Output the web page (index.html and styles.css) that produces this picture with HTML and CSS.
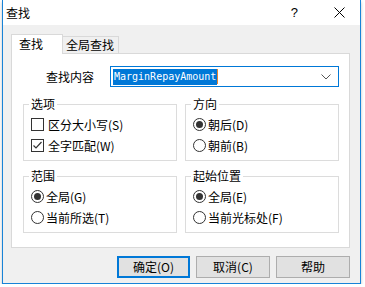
FILE: index.html
```html
<!DOCTYPE html>
<html lang="zh-CN">
<head>
    <meta charset="UTF-8">
    <title>查找</title>
    <link rel="stylesheet" href="styles.css">
</head>
<body>
    <div class="window">
        <div class="titlebar">
            <span class="title">查找</span>
            <span class="help">?</span>
            <span class="close">
                <svg width="11" height="11" viewBox="0 0 11 11">
                    <path d="M0.5 0.5 L10.5 10.5 M10.5 0.5 L0.5 10.5" stroke="#000" stroke-width="1" fill="none"/>
                </svg>
            </span>
        </div>
        <div class="content">
            <div class="tabs">
                <div class="tab active">查找</div>
                <div class="tab">全局查找</div>
            </div>
            <div class="panel">
                <div class="find-row">
                    <span class="find-label">查找内容</span>
                    <div class="combo">
                        <span class="combo-text">MarginRepayAmount</span><span class="caret"></span>
                        <svg class="chevron" width="10" height="6" viewBox="0 0 10 6">
                            <path d="M0.5 0.5 L5 5 L9.5 0.5" stroke="#555" stroke-width="1" fill="none"/>
                        </svg>
                    </div>
                </div>
                <div class="groups">
                    <div class="group">
                        <div class="group-title">选项</div>
                        <div class="group-items">
                            <div class="item"><span class="check"></span>区分大小写(S)</div>
                            <div class="item">
                                <span class="check">
                                    <svg width="11" height="11" viewBox="0 0 11 11">
                                        <path d="M1.5 5.5 L4 8 L9.5 2" stroke="#333" stroke-width="1.2" fill="none"/>
                                    </svg>
                                </span>全字匹配(W)
                            </div>
                        </div>
                    </div>
                    <div class="group">
                        <div class="group-title">方向</div>
                        <div class="group-items">
                            <div class="item"><span class="radio checked"></span>朝后(D)</div>
                            <div class="item"><span class="radio"></span>朝前(B)</div>
                        </div>
                    </div>
                    <div class="group">
                        <div class="group-title">范围</div>
                        <div class="group-items">
                            <div class="item"><span class="radio checked"></span>全局(G)</div>
                            <div class="item"><span class="radio"></span>当前所选(T)</div>
                        </div>
                    </div>
                    <div class="group">
                        <div class="group-title">起始位置</div>
                        <div class="group-items">
                            <div class="item"><span class="radio checked"></span>全局(E)</div>
                            <div class="item"><span class="radio"></span>当前光标处(F)</div>
                        </div>
                    </div>
                </div>
            </div>
            <div class="buttons">
                <button class="btn default">确定(O)</button>
                <button class="btn">取消(C)</button>
                <button class="btn">帮助</button>
            </div>
        </div>
    </div>
</body>
</html>
```

FILE: styles.css
```css
body {
    margin: 0;
    background-color: #fff;
    font-family: "Noto Sans CJK SC", sans-serif;
    font-size: 12px;
    color: #000;
}

.window {
    box-sizing: border-box;
    width: 359px;
    height: 284px;
    margin-left: 2px;
    border: 1px solid #1883d7;
    border-top: none;
    background-color: #f0f0f0;
    box-shadow: 0 2px 3px rgba(0, 0, 0, 0.25);
    display: flex;
    flex-direction: column;
}

.titlebar {
    height: 25px;
    flex-shrink: 0;
    background-color: #fff;
    display: flex;
    align-items: center;
    padding-left: 3px;
}

.title {
    flex: 1;
    line-height: 14px;
}

.help {
    font-family: "Liberation Sans", sans-serif;
    font-size: 13px;
    margin-right: 36px;
}

.close {
    display: flex;
    margin-right: 15px;
}

.content {
    padding: 9px 10px 5px 8px;
    display: flex;
    flex-direction: column;
}

/* tabs */
.tabs {
    height: 19px;
    display: flex;
    align-items: flex-end;
}

.tab {
    box-sizing: border-box;
    width: 56px;
    height: 17px;
    padding: 1px 0 0 3px;
    line-height: 14px;
    border: 1px solid #d9d9d9;
    border-bottom: none;
    border-left: none;
    background-color: #f0f0f0;
}

.tab.active {
    width: 52px;
    height: 20px;
    padding: 2px 0 0 7px;
    margin-bottom: -1px;
    border-left: 1px solid #d9d9d9;
    background-color: #fff;
    position: relative;
    z-index: 1;
}

.panel {
    box-sizing: border-box;
    width: 339px;
    height: 195px;
    border: 1px solid #d9d9d9;
    background-color: #fff;
    padding: 12px 10px 0 11px;
}

/* find row */
.find-row {
    display: flex;
    align-items: center;
    height: 21px;
}

.find-label {
    width: 48px;
    margin: 0 16px 0 23px;
    line-height: 14px;
}

.combo {
    box-sizing: border-box;
    width: 229px;
    height: 21px;
    border: 1px solid #0078d7;
    display: flex;
    align-items: center;
    padding: 0 7px 0 2px;
}

.combo-text {
    background-color: #0078d7;
    color: #fff;
    font-family: "DejaVu Sans Mono", monospace;
    font-size: 10px;
    line-height: 16px;
    padding: 0 1px;
}

.caret {
    width: 1px;
    height: 15px;
    background-color: #e8842c;
}

.chevron {
    margin-left: auto;
}

/* option groups */
.groups {
    margin-top: 17px;
    display: grid;
    grid-template-columns: 154px 154px;
    column-gap: 8px;
    row-gap: 15px;
}

.group {
    box-sizing: border-box;
    height: 57px;
    border: 1px solid #dcdcdc;
}

.group-title {
    width: fit-content;
    height: 12px;
    line-height: 12px;
    margin: -7px 0 0 5px;
    padding: 0 2px;
    background-color: #fff;
}

.group-items {
    padding-top: 4px;
}

.item {
    height: 21px;
    display: flex;
    align-items: center;
    padding-left: 7px;
    line-height: 14px;
}

.check {
    box-sizing: border-box;
    width: 13px;
    height: 13px;
    border: 1px solid #333;
    margin-right: 4px;
    display: flex;
}

.radio {
    box-sizing: border-box;
    width: 13px;
    height: 13px;
    border: 1px solid #333;
    border-radius: 50%;
    margin-right: 2px;
    display: flex;
    align-items: center;
    justify-content: center;
}

.radio.checked::after {
    content: "";
    width: 7px;
    height: 7px;
    border-radius: 50%;
    background-color: #333;
}

/* buttons */
.buttons {
    margin-top: 8px;
    display: flex;
    justify-content: flex-end;
    gap: 6px;
}

.btn {
    box-sizing: border-box;
    width: 74px;
    height: 22px;
    padding: 0;
    border: 1px solid #adadad;
    background-color: #e1e1e1;
    font-family: "Noto Sans CJK SC", sans-serif;
    font-size: 12px;
    line-height: 14px;
    color: #000;
}

.btn.default {
    width: 73px;
    border: 2px solid #0078d7;
}
```
